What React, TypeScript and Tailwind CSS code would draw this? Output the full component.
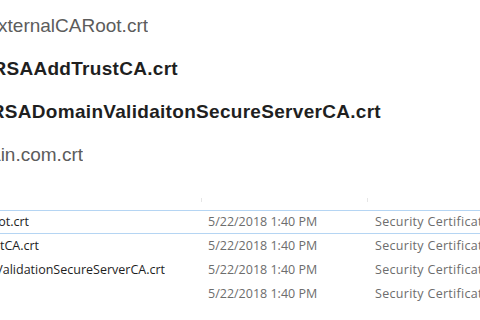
import type { ReactNode } from "react";

// Big filenames at the top (cropped on the left, like the screenshot)
const BIG_FILES = [
  { name: "AddTrustExternalCARoot.crt", end: "w-[148px]", bold: false },
  { name: "COMODORSAAddTrustCA.crt", end: "w-[178px]", bold: true },
  { name: "COMODORSADomainValidaitonSecureServerCA.crt", end: "w-[381px]", bold: true },
  { name: "domain.com.crt", end: "w-[83px]", bold: false },
];

const ROWS = [
  { name: "AddTrustExternalCARoot.crt", end: "w-[29px]", selected: true },
  { name: "COMODORSAAddTrustCA.crt", end: "w-[39px]", selected: false },
  { name: "COMODORSADomainValidationSecureServerCA.crt", end: "w-[165px]", selected: false },
  { name: "domain.com.crt", end: "w-[0px]", selected: false },
];

function ClipEnd({ width, children }: { width: string; children: ReactNode }) {
  // text is right-aligned to the point where it ends, overflow spills off the left edge
  return (
    <div className={`${width} flex justify-end overflow-hidden shrink-0`}>
      <span className="whitespace-nowrap shrink-0">{children}</span>
    </div>
  );
}

export default function App() {
  return (
    <div className="w-[480px] h-[320px] bg-white overflow-hidden">
      {/* ── Large file names ── */}
      <div
        className="flex flex-col pt-[14px] gap-[20px] text-[19px] leading-[23px]"
        style={{ fontFamily: '"Liberation Sans", Arial, sans-serif' }}
      >
        {BIG_FILES.map((f) => (
          <ClipEnd key={f.name} width={f.end}>
            <span
              className={
                f.bold ? "font-bold tracking-[0.3px] text-[#1f1f1f]" : "text-[#5c5c5c]"
              }
            >
              {f.name}
            </span>
          </ClipEnd>
        ))}
      </div>

      {/* ── Explorer details list ── */}
      <div
        className="mt-[20px] text-[12.5px]"
        style={{ fontFamily: '"Open Sans", "Noto Sans", sans-serif' }}
      >
        {/* header separators */}
        <div className="h-[24px] flex items-end pb-[8px]">
          <div className="w-[201px]" />
          <div className="w-px h-[4px] bg-[#e6e6e6]" />
          <div className="w-[165px]" />
          <div className="w-px h-[4px] bg-[#e6e6e6]" />
        </div>

        {ROWS.map((r) => (
          <div
            key={r.name}
            className={`flex items-center h-[24px] border-y ${
              r.selected ? "border-[#b5d5f3]" : "border-transparent"
            }`}
          >
            <div className="w-[208px] shrink-0 text-[#1e1e1e]">
              <ClipEnd width={r.end}>{r.name}</ClipEnd>
            </div>
            <div className="w-[167px] shrink-0 text-[#6d6d6d] whitespace-nowrap">
              5/22/2018 1:40 PM
            </div>
            <div className="text-[#6d6d6d] whitespace-nowrap tracking-[0.3px]">
              Security Certificate
            </div>
          </div>
        ))}
      </div>
    </div>
  );
}
